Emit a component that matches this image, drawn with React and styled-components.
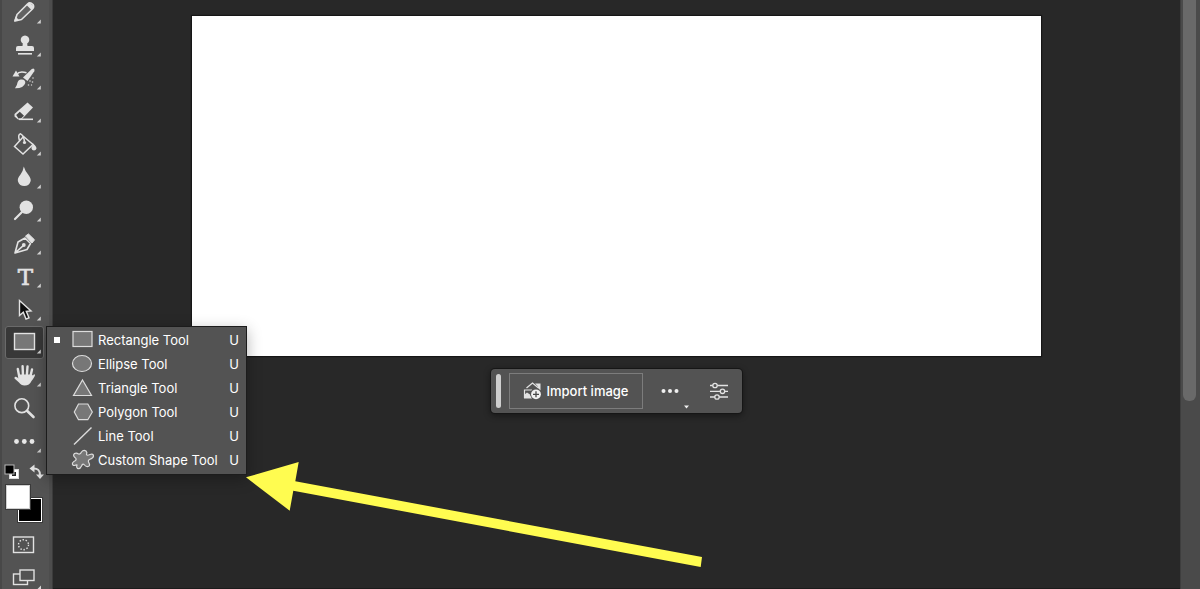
import React from 'react'
import styled, { createGlobalStyle } from 'styled-components'

const GlobalStyle = createGlobalStyle`
    body {
        margin: 0;
        background: #282828;
        font-family: Inter, 'Liberation Sans', sans-serif;
        font-size: 13px;
        color: #fff;
    }

    * {
        box-sizing: border-box;
    }

    button {
        padding: 0;
        border: 0;
        background: none;
        color: inherit;
        font: inherit;
    }

    svg {
        display: block;
        flex: none;
    }
`

const Screen = styled.div`
    position: relative;
    display: grid;
    grid-template-columns: 53px 1fr 20px;
    height: 100vh;
    overflow: hidden;
`

const Toolbar = styled.aside`
    min-height: 0;
    background: #535353;
    border-left: 2px solid #484848;
    border-right: 1px solid #3c3c3c;
    box-shadow: inset -3px 0 0 #4d4d4d, 1px 0 1px #1c1c1c;
`

/* the list is scrolled a little, so the first tool is cut at the top */
const ToolList = styled.div`
    display: flex;
    flex-direction: column;
    margin-top: -4px;
    padding-left: 3px;
`

const ToolSlot = styled.div`
    position: relative;
    width: 39px;
    height: 33px;
`

const ToolButton = styled.button`
    display: block;
    width: 39px;
    height: 33px;
    border-radius: 3px;
    background: ${props => props.$active ? '#383838' : 'transparent'};
    box-shadow: ${props => props.$active ? 'inset 0 0 0 1px #6a6a6a' : 'none'};
`

const ToolMenu = styled.div`
    position: absolute;
    z-index: 2;
    top: 0;
    left: 41px;
    width: 201px;
    padding: 1px 0 2px;
    border: 1px solid #1c1c1c;
    background: #535353;
    box-shadow: 0 4px 14px rgba(0, 0, 0, 0.3);
`

const MenuItem = styled.button`
    display: flex;
    align-items: center;
    width: 100%;
    height: 24px;
    padding: 0 7px;
    text-align: left;
    white-space: nowrap;
`

const Bullet = styled.span`
    width: 6px;
    height: 6px;
    margin-right: 11px;
    background: ${props => props.$on ? '#fff' : 'transparent'};
`

const ItemName = styled.span`
    flex: 1;
    margin-left: 3px;
`

const ColorActions = styled.div`
    display: flex;
    align-items: flex-start;
    justify-content: space-between;
    width: 40px;
    height: 27px;
    margin-left: -1px;
    padding-top: 6px;
`

const Swatches = styled.div`
    position: relative;
    width: 37px;
    height: 37px;
    margin-bottom: 14px;
`

const Swatch = styled.button`
    position: absolute;
    width: 24px;
    height: 24px;
    background: ${props => props.$color};
    border: 1px solid ${props => props.$front ? '#d0d0d0' : '#fff'};
    box-shadow: 0 0 0 1px #3a3a3a;
    ${props => props.$front ? 'top: 0; left: 1px; z-index: 1;' : 'right: 0; bottom: 0;'}
`

const Workspace = styled.main`
    display: flex;
    flex-direction: column;
    align-items: center;
    gap: 13px;
    padding-top: 16px;
    background: #282828;
    border-bottom: 1px solid #1c1c1c;
`

const Artboard = styled.div`
    width: calc(100% - 278px);
    aspect-ratio: 849 / 340;
    background: #fff;
    box-shadow: 0 0 1px 1px #161616;
`

const TaskBar = styled.div`
    display: flex;
    align-items: center;
    height: 44px;
    padding: 0 5px;
    border-radius: 4px;
    background: #535353;
    box-shadow: 0 0 0 1px #161616, 0 2px 6px 1px rgba(0, 0, 0, 0.4);
`

const Grip = styled.span`
    width: 5px;
    height: 34px;
    margin-right: 8px;
    border-radius: 3px;
    background: #cfcfcf;
`

const ImportButton = styled.button`
    display: flex;
    align-items: center;
    gap: 4px;
    height: 36px;
    padding: 0 13px;
    border: 1px solid #7c7c7c;
    font-weight: 500;
    white-space: nowrap;
`

const BarButton = styled.button`
    width: 47px;
    height: 44px;
`

const ScrollTrack = styled.div`
    padding: 0 4px 0 2px;
    background: #4a4a4a;
    border-left: 1px solid #3e3e3e;
`

const ScrollThumb = styled.div`
    height: 68%;
    border-radius: 0 0 6px 6px;
    background: #696969;
`

const Arrow = styled.svg`
    position: absolute;
    z-index: 3;
    top: 461px;
    left: 245px;
    pointer-events: none;
`

const line = { fill: 'none', stroke: '#e2e2e2', strokeWidth: 1.6 }

// all tool drawings share the 39x33 box of the tool button
const tools = [
    {
        name: 'Pencil',
        more: true,
        art: <>
            <path d="M10 25 L12 18.5 L22.5 8 Q25 5.500 28 8.500 Q29.500 11 27.500 13 L16.500 23.500 Z" fill="#626262" stroke="#e2e2e2" strokeWidth="1.600" strokeLinejoin="round" />
            <path d="M21.500 9 L24.500 6.500 L29 10.500 L26.500 14 Z" fill="#e2e2e2" />
            <path d="M9 25.500 L10.500 20.500 L14 24 Z" fill="#e2e2e2" />
        </>,
    },
    {
        name: 'Clone Stamp',
        more: true,
        art: <>
            <path d="M17.500 17 L17.800 14.500 A4.300 4.300 0 1 1 22.200 14.500 L22.500 17 H27 Q29 17 29 19 V22 H11 V19 Q11 17 13 17 Z" fill="#e2e2e2" />
            <path d="M13 24.800 H27" {...line} />
        </>,
    },
    {
        name: 'History Brush',
        more: true,
        art: <>
            <path d="M28.500 6.500 Q30.300 7.500 29.300 9.300 L22.500 19 L18 15.500 L26.800 7 Z" fill="#e2e2e2" />
            <path d="M16 17.500 Q20.500 17 20.300 21 Q18.500 26.500 10 26.200 Q12.200 23.500 12.500 20.500 Q13.500 17.500 16 17.500 Z" fill="#e2e2e2" />
            <path d="M11.500 12.500 Q14.500 8.500 21.500 10.800" {...line} />
            <path d="M7.500 14.500 L11 8.500 L14.500 14.500 Z" fill="#e2e2e2" />
            <g fill="#cfcfcf">
                <circle cx="28" cy="16" r=".8" /><circle cx="25" cy="19" r=".8" />
                <circle cx="27.500" cy="20" r=".8" /><circle cx="23.500" cy="23" r=".8" />
                <circle cx="26.500" cy="23" r=".7" />
            </g>
        </>,
    },
    {
        name: 'Eraser',
        more: true,
        art: <>
            <path d="M9.500 19 L22.500 7.500 L28 12.500 L16.500 24.500 H13 L9.500 21.500 Z" fill="#e2e2e2" />
            <path d="M11.200 20 L14.800 16.700 L19 20.800 L16 23.400 H13.500 Z" fill="#484848" />
            <path d="M14 24.300 H28" {...line} />
        </>,
    },
    {
        name: 'Paint Bucket',
        more: true,
        art: <>
            <path d="M9.500 18.500 L18.500 8.500 L28 16.500 L18 26 Z" {...line} strokeWidth="1.500" />
            <path d="M19.500 14 Q19 7.500 15.500 5.800 Q12.500 6.500 14.500 12.500" {...line} strokeWidth="1.500" />
            <circle cx="19.500" cy="14.500" r="1.600" fill="#e2e2e2" />
            <path d="M26 14 Q31.500 17.500 31.500 20.500 A2.600 2.600 0 0 1 26.500 20.500 Q26.500 18.500 28.500 16.500 Z" fill="#e2e2e2" />
        </>,
    },
    {
        name: 'Blur',
        more: true,
        art: <path d="M18.800 5.500 Q20 10 23.500 14 Q26.500 18 25.500 20.500 Q24 25 19.300 25 Q14.500 25 13 20.500 Q12 17.500 15.500 13.500 Q18 10.500 18.800 5.500 Z" fill="#e2e2e2" />,
    },
    {
        name: 'Dodge',
        more: true,
        art: <>
            <circle cx="21.300" cy="13.300" r="6.700" fill="#e2e2e2" />
            <path d="M17 18 L10 25" {...line} strokeWidth="2.200" strokeLinecap="round" />
        </>,
    },
    {
        name: 'Pen',
        more: true,
        art: <>
            <path d="M10 26 L13 15 L20 11 L25.500 16.500 L22 22.500 Z M10.500 25.500 L18 18.800" {...line} strokeLinejoin="round" />
            <circle cx="18.800" cy="18" r="1.900" fill="#e2e2e2" />
            <path d="M20.500 9 L23.500 7 L29.500 12.800 L27 16 Z" fill="#e2e2e2" stroke="#e2e2e2" strokeLinejoin="round" />
        </>,
    },
    {
        name: 'Type',
        more: true,
        art: <text x="20.500" y="25" textAnchor="middle" fontFamily="'DejaVu Serif', serif" fontSize="23" fill="#e2e2e2" stroke="#e2e2e2" strokeWidth=".6">T</text>,
    },
    {
        name: 'Path Selection',
        more: true,
        art: <path d="M14.500 7.500 V22.500 L18.300 19.200 L21 26 L24 24.800 L21.300 18.300 L26 18 Z" fill="#0c0c0c" stroke="#e2e2e2" strokeWidth="1.400" />,
    },
    {
        name: 'Rectangle',
        more: true,
        active: true,
        art: <rect x="9.500" y="7.500" width="20" height="16" fill="#777" stroke="#e2e2e2" strokeWidth="1.400" />,
    },
    {
        name: 'Hand',
        more: true,
        art: <>
            <path d="M14.500 19 L12.800 10 M18 17 L17.600 7.300 M21.800 17 L22.500 7.500 M25.300 18 L27 10.500" {...line} strokeWidth="2.400" strokeLinecap="round" />
            <path d="M13.300 15.500 H26.400 L28 16.500 Q29.500 14.500 30 16 Q30 17.500 26.500 22 Q24.500 26.500 19.500 26.500 Q16 26.500 14 23.500 L9.500 19.500 Q9 17.500 11 17.800 L14 19.500 Z" fill="#e2e2e2" />
        </>,
    },
    {
        name: 'Zoom',
        art: <>
            <circle cx="16.800" cy="13.700" r="6.900" {...line} />
            <path d="M22 18.800 L28.500 25" {...line} strokeWidth="2.600" strokeLinecap="round" />
        </>,
    },
    {
        name: 'Edit Toolbar',
        more: true,
        art: <g fill="#e8e8e8">
            <circle cx="11.500" cy="16.500" r="2.400" /><circle cx="19.300" cy="16.500" r="2.400" /><circle cx="27" cy="16.500" r="2.400" />
        </g>,
    },
]

const shape = { fill: '#777', stroke: '#dcdcdc', strokeWidth: 1.2 }

const shapeTools = [
    { name: 'Rectangle Tool', art: <rect x="2" y="3.500" width="19" height="15" {...shape} /> },
    { name: 'Ellipse Tool', art: <ellipse cx="11" cy="11.500" rx="9.500" ry="8" {...shape} /> },
    { name: 'Triangle Tool', art: <path d="M11.500 4 L20.500 19.500 H2.500 Z" {...shape} /> },
    { name: 'Polygon Tool', art: <path d="M7.500 4 H16.800 L21.300 12 L16.800 19.700 H7.500 L3.300 12 Z" {...shape} /> },
    { name: 'Line Tool', art: <path d="M3 20.500 L20.500 3.500" {...shape} strokeWidth="1.400" /> },
    {
        name: 'Custom Shape Tool',
        art: <path d="M10.500 4 Q12.500 1.500 15 3 Q16.500 4.500 15.500 6.500 Q16 8 19 6.500 Q22.500 5.500 22.500 8 Q22.500 10 18.500 11.500 Q16.500 12.500 18 15 Q19.500 18 17 18.500 Q15 19 13 16.500 Q11.500 15.500 10.500 18 Q9 21.500 6.500 20.500 Q5 19 6 17 Q5.500 16.500 3.500 17.500 Q1 17.500 1.500 15 Q2.500 13.500 4.500 12.500 Q6 11 4 9.500 Q1.500 7.500 3.500 5.500 Q5.500 4.500 7.500 6 Q9.500 6.500 10.500 4 Z" {...shape} />,
    },
]

function ToolIcon({ more, children }) {
    return (
        <svg width="39" height="33" viewBox="0 0 39 33" aria-hidden="true">
            {children}
            {more && <path d="M35.800 23.500 V27.500 H31.800 Z" fill="#d0d0d0" />}
        </svg>
    )
}

function ShapeMenu() {
    return (
        <ToolMenu role="menu">
            {shapeTools.map((item, i) => (
                <MenuItem key={item.name} role="menuitem">
                    <Bullet $on={i === 0} />
                    <svg width="24" height="24" viewBox="0 0 24 24" aria-hidden="true">{item.art}</svg>
                    <ItemName>{item.name}</ItemName>
                    <span>U</span>
                </MenuItem>
            ))}
        </ToolMenu>
    )
}

function ColorControls() {
    return (
        <>
            <ColorActions>
                <button aria-label="Default colors">
                    <svg width="16" height="16" viewBox="0 0 16 16">
                        <rect x="5.500" y="5.500" width="9" height="9" fill="#fff" stroke="#d8d8d8" />
                        <rect x="8" y="8" width="4" height="4" fill="#222" />
                        <rect x="1" y="1" width="9" height="9" fill="#000" stroke="#b8b8b8" />
                    </svg>
                </button>
                <button aria-label="Swap colors">
                    <svg width="15" height="16" viewBox="0 0 15 16">
                        <path d="M4 4.500 Q11 4 11 11" {...line} strokeWidth="2" />
                        <path d="M0.500 4.500 L5.500 .5 V8.500 Z M7 10.500 H15 L11 15 Z" fill="#e2e2e2" />
                    </svg>
                </button>
            </ColorActions>
            <Swatches>
                <Swatch $front $color="#fff" aria-label="Foreground color" />
                <Swatch $color="#000" aria-label="Background color" />
            </Swatches>
        </>
    )
}

function ContextBar() {
    return (
        <TaskBar>
            <Grip />
            <ImportButton>
                <svg width="19" height="18" viewBox="0 0 19 18" aria-hidden="true">
                    <path d="M3.500 6 L9.500 1 L15.500 6" {...line} strokeWidth="1.300" />
                    <path d="M12 1.500 H17.500 V8.500 L15 6 V4.500 Z" fill="#e2e2e2" />
                    <path d="M1.500 16 V8 H9" {...line} strokeWidth="1.200" />
                    <path d="M1 16.500 V13 L4 10.500 L7 12.500 L9 16.500 Z" fill="#e2e2e2" />
                    <circle cx="13" cy="12.300" r="5.700" fill="#535353" />
                    <circle cx="13" cy="12.300" r="4.900" fill="#f0f0f0" />
                    <path d="M13 9.300 V15.300 M10 12.300 H16" stroke="#484848" strokeWidth="1.300" />
                </svg>
                Import image
            </ImportButton>
            <BarButton aria-label="More options">
                <svg width="47" height="44" viewBox="0 0 47 44">
                    <g fill="#f0f0f0">
                        <circle cx="20.500" cy="22" r="2" /><circle cx="27" cy="22" r="2" /><circle cx="33.500" cy="22" r="2" />
                        <path d="M41 36.500 H46 L43.500 39.500 Z" />
                    </g>
                </svg>
            </BarButton>
            <BarButton aria-label="Properties">
                <svg width="47" height="44" viewBox="0 0 47 44">
                    <path d="M20 16.500 H38 M20 22.300 H38 M20 28 H38" {...line} strokeWidth="1.300" />
                    <g fill="#535353" stroke="#e2e2e2" strokeWidth="1.300">
                        <circle cx="25" cy="16.500" r="2.200" /><circle cx="32.500" cy="22.300" r="2.200" /><circle cx="27" cy="28" r="2.200" />
                    </g>
                </svg>
            </BarButton>
        </TaskBar>
    )
}

export default function App() {

    return (
        <>
        <GlobalStyle />
        <Screen>
            <Toolbar>
                <ToolList>
                    {tools.map(tool => (
                        <ToolSlot key={tool.name}>
                            <ToolButton $active={tool.active} aria-label={tool.name}>
                                <ToolIcon more={tool.more}>{tool.art}</ToolIcon>
                            </ToolButton>
                            {tool.active && <ShapeMenu />}
                        </ToolSlot>
                    ))}
                    <ColorControls />
                    <ToolButton aria-label="Quick mask">
                        <ToolIcon>
                            <rect x="8.500" y="1" width="20" height="15.500" {...line} strokeWidth="1.400" />
                            <circle cx="18.500" cy="8.700" r="5" {...line} strokeWidth="1.400" strokeDasharray="1.400 1.742" />
                        </ToolIcon>
                    </ToolButton>
                    <ToolButton aria-label="Screen mode">
                        <ToolIcon>
                            <rect x="8.500" y="5" width="14" height="10.500" {...line} strokeWidth="1.400" />
                            <rect x="15" y="1" width="14" height="10.500" fill="#535353" stroke="#e2e2e2" strokeWidth="1.400" />
                            <path d="M36 16.500 V21 H31.500 Z" fill="#d8d8d8" />
                        </ToolIcon>
                    </ToolButton>
                </ToolList>
            </Toolbar>
            <Workspace>
                <Artboard />
                <ContextBar />
            </Workspace>
            <ScrollTrack>
                <ScrollThumb />
            </ScrollTrack>
            <Arrow width="458" height="107" viewBox="245 461 458 107" aria-hidden="true">
                <path d="M246 477.300 L298.700 462 L295.300 481.300 L702 557 L700.700 567 L293.300 490.700 L289.700 510.700 Z" fill="#fffc50" />
            </Arrow>
        </Screen>
        </>
    )
}
